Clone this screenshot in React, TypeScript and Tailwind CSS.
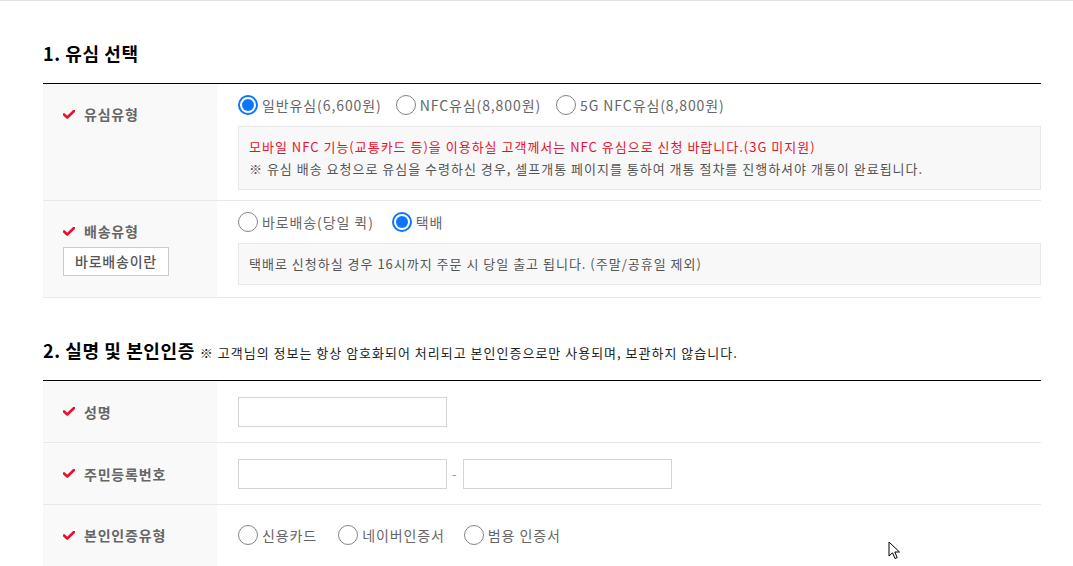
import React from "react";

const font = { fontFamily: '"Noto Sans CJK KR", "Noto Sans", sans-serif' };

function Check() {
  return (
    <svg width="12" height="9" viewBox="0 0 12 9" className="shrink-0">
      <path d="M1 4.5 L4.3 7.5 L11 1" fill="none" stroke="#e8112d" strokeWidth="2.6" strokeLinecap="round" strokeLinejoin="round" />
    </svg>
  );
}

function Radio({ checked, label, gap = "mr-[13px]" }: { checked?: boolean; label: string; gap?: string }) {
  return (
    <label className={`flex items-center gap-[4px] h-[22px] ${gap}`}>
      {checked ? (
        <span className="w-5 h-5 rounded-full border-2 border-[#0a75ff] flex items-center justify-center bg-white">
          <span className="w-[12px] h-[12px] rounded-full bg-[#0a75ff]" />
        </span>
      ) : (
        <span className="w-5 h-5 rounded-full border border-[#858585] bg-white" />
      )}
      <span className="text-[14px] leading-[20px] text-[#666] tracking-[0.9px]">{label}</span>
    </label>
  );
}

function Label({ text }: { text: string }) {
  return (
    <div className="flex items-center gap-[9px] h-[20px]">
      <Check />
      <span className="text-[14px] leading-[20px] font-bold text-[#666] tracking-[0.8px]">{text}</span>
    </div>
  );
}

function Input() {
  return <input className="w-[209px] h-[30px] border border-[#d4d4d4] bg-white outline-none" />;
}

export default function App() {
  return (
    <div className="relative min-h-[566px] bg-white border-t border-[#e2e2e2] overflow-hidden" style={font}>
      <div className="w-[998px] ml-[43px]">
        <h2 className="mt-[40px] mb-[18px] text-[18px] leading-[24px] font-bold text-black tracking-[0.6px]">1. 유심 선택</h2>
        <div className="border-t border-black">
          <div className="flex border-b border-[#e8e8e8]">
            <div className="w-[174px] bg-[#f9f9f9] pl-[20px] pt-[20px]">
              <Label text="유심유형" />
            </div>
            <div className="flex-1 pl-[21px] pt-[10px] pb-[10px]">
              <div className="flex">
                <Radio checked label="일반유심(6,600원)" gap="mr-[14px]" />
                <Radio label="NFC유심(8,800원)" gap="mr-[15px]" />
                <Radio label="5G NFC유심(8,800원)" />
              </div>
              <div className="mt-[10px] border border-[#e8e8e8] bg-[#f8f8f8] px-[10px] py-[9px] text-[13px] leading-[22px] tracking-[1px]">
                <p className="text-[#e8112d]">모바일 NFC 기능(교통카드 등)을 이용하실 고객께서는 NFC 유심으로 신청 바랍니다.(3G 미지원)</p>
                <p className="text-[#555]">※ 유심 배송 요청으로 유심을 수령하신 경우, 셀프개통 페이지를 통하여 개통 절차를 진행하셔야 개통이 완료됩니다.</p>
              </div>
            </div>
          </div>
          <div className="flex border-b border-[#e8e8e8]">
            <div className="w-[174px] bg-[#f9f9f9] pl-[20px] pt-[20px] pb-[21px]">
              <Label text="배송유형" />
              <button className="mt-[6px] w-[106px] h-[29px] border border-[#cccccc] bg-white text-[14px] text-[#555] font-medium tracking-[0.8px]">바로배송이란</button>
            </div>
            <div className="flex-1 pl-[21px] pt-[10px] pb-[12px]">
              <div className="flex">
                <Radio label="바로배송(당일 퀵)" gap="mr-[18px]" />
                <Radio checked label="택배" />
              </div>
              <div className="mt-[10px] border border-[#e8e8e8] bg-[#f8f8f8] px-[10px] py-[9px] text-[13px] leading-[22px] text-[#555] tracking-[1px]">
                택배로 신청하실 경우 16시까지 주문 시 당일 출고 됩니다. (주말/공휴일 제외)
              </div>
            </div>
          </div>
        </div>

        <h2 className="mt-[40px] mb-[15px] text-[18px] leading-[24px] font-bold text-black flex items-baseline gap-[5px]">
          <span className="tracking-[0.6px]">2. 실명 및 본인인증</span>
          <span className="text-[13px] font-normal text-[#222] tracking-[1px]">※ 고객님의 정보는 항상 암호화되어 처리되고 본인인증으로만 사용되며, 보관하지 않습니다.</span>
        </h2>
        <div className="border-t border-black">
          <div className="flex border-b border-[#e8e8e8] h-[62px]">
            <div className="w-[174px] bg-[#f9f9f9] pl-[20px] flex items-center">
              <Label text="성명" />
            </div>
            <div className="flex-1 pl-[21px] flex items-center">
              <Input />
            </div>
          </div>
          <div className="flex border-b border-[#e8e8e8] h-[62px]">
            <div className="w-[174px] bg-[#f9f9f9] pl-[20px] flex items-center">
              <Label text="주민등록번호" />
            </div>
            <div className="flex-1 pl-[21px] flex items-center gap-[5px]">
              <Input />
              <span className="text-[13px] text-[#999] w-[6px]">-</span>
              <Input />
            </div>
          </div>
          <div className="flex h-[62px]">
            <div className="w-[174px] bg-[#f9f9f9] pl-[20px] flex items-center pb-[2px]">
              <Label text="본인인증유형" />
            </div>
            <div className="flex-1 pl-[21px] flex items-center pb-[2px]">
              <Radio label="신용카드" gap="mr-[21px]" />
              <Radio label="네이버인증서" gap="mr-[19px]" />
              <Radio label="범용 인증서" />
            </div>
          </div>
        </div>
      </div>
      <svg className="absolute left-[888px] top-[540px]" width="13" height="20" viewBox="0 0 13 20">
        <path d="M1 1 L1 15 L4.5 11.8 L7 17.5 L9.2 16.6 L6.8 11 L11.5 11 Z" fill="white" stroke="black" strokeWidth="1" strokeLinejoin="round" />
      </svg>
    </div>
  );
}
